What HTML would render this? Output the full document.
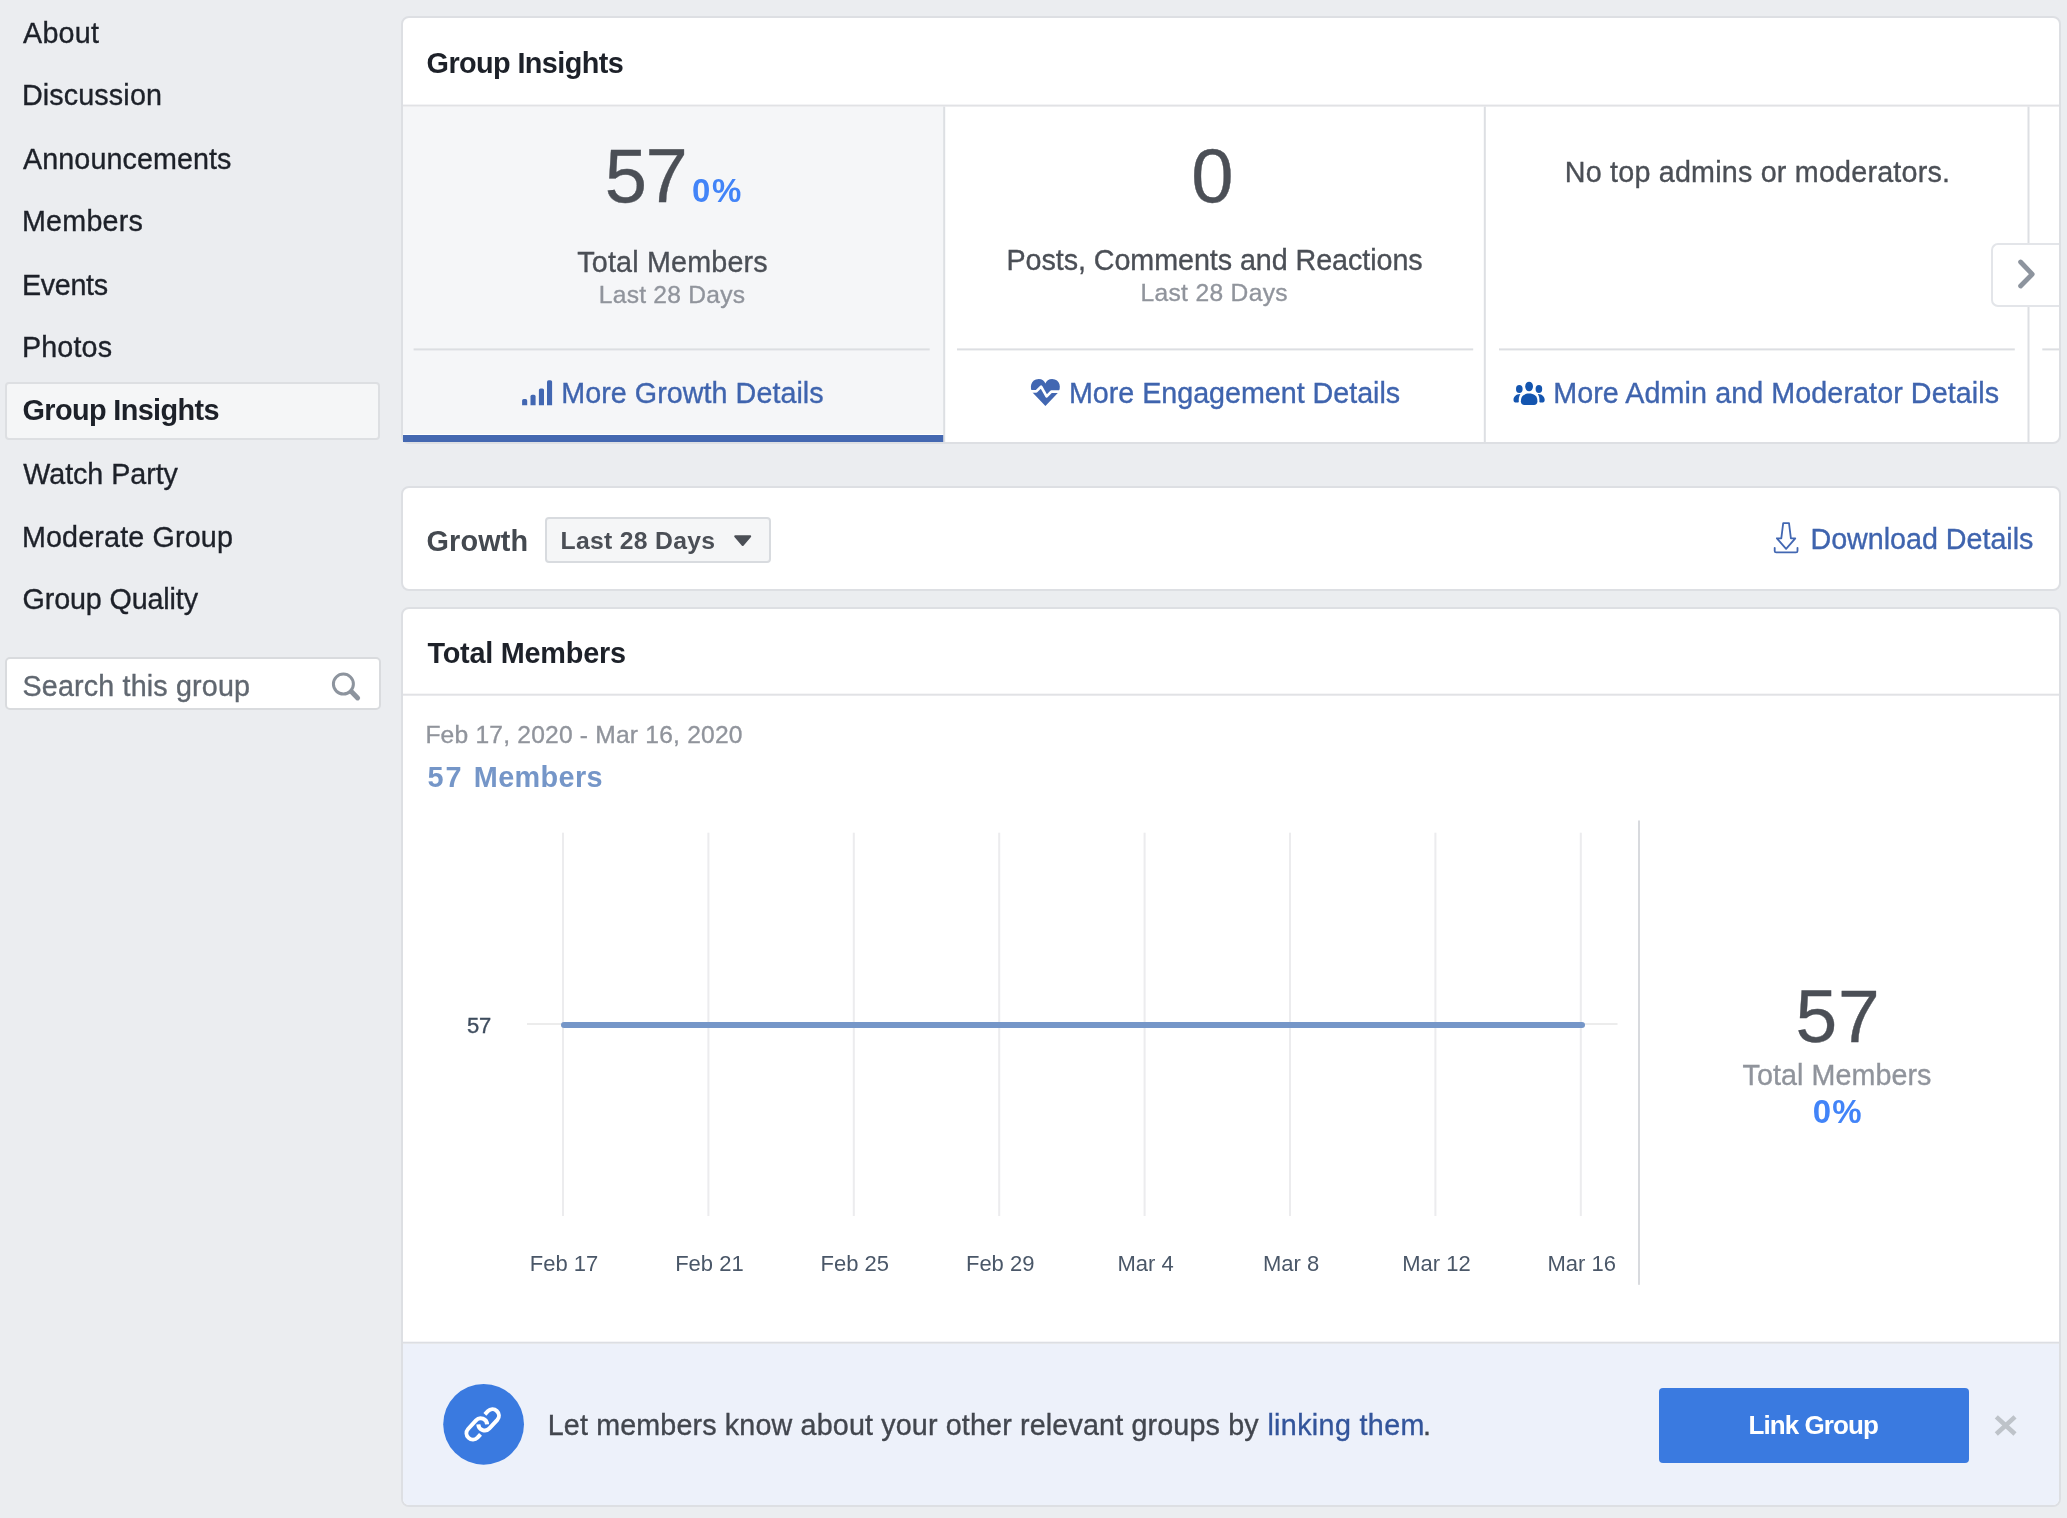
<!DOCTYPE html>
<html lang="en"><head><meta charset="utf-8"><title>Group Insights</title>
<style>
html,body{margin:0;padding:0}
body{width:2067px;height:1518px;overflow:hidden;position:relative;background:#ebedf0;font-family:"Liberation Sans",sans-serif;-webkit-font-smoothing:antialiased}
.t{position:absolute;white-space:pre;display:block;-webkit-text-stroke:0.35px currentColor}
#tx{position:absolute;left:0;top:0;width:2067px;height:1518px;will-change:transform}
.b{position:absolute;box-sizing:border-box}
.card{background:#fff;border:2px solid #dddfe3;border-radius:8px}
svg.ov{position:absolute;left:0;top:0;width:2067px;height:1518px;pointer-events:none}
.ax{font-family:"Liberation Sans",sans-serif;font-size:22px;fill:#4a5768}
</style></head><body>

<div class="b" style="left:5px;top:382px;width:375px;height:58px;background:#f5f6f7;border:2px solid #dddfe2;border-radius:4px"></div>
<div class="b" style="left:5px;top:657px;width:376px;height:53px;background:#fff;border:2px solid #d9dbde;border-radius:5px"></div>

<div class="b card" style="left:401px;top:16px;width:1660px;height:428px;overflow:hidden">
  <div class="b" style="left:0;top:89px;width:541px;height:327px;background:#f5f6f8"></div>
</div>
<div class="b" style="left:403px;top:435px;width:541px;height:7px;background:#4468b1"></div>
<div class="b" style="left:1991px;top:243px;width:70px;height:64px;background:#fff;border:2px solid #e3e5e9;border-right:0;border-radius:7px 0 0 7px"></div>
<div class="b" style="left:2059px;top:243px;width:2px;height:64px;background:#dddfe3"></div>

<div class="b card" style="left:401px;top:486px;width:1660px;height:105px"></div>
<div class="b" style="left:545px;top:517px;width:226px;height:46px;background:#f5f6f7;border:2px solid #d8dbdf;border-radius:4px"></div>

<div class="b card" style="left:401px;top:607px;width:1660px;height:900px;overflow:hidden">
  <div class="b" style="left:0;top:735px;width:1656px;height:170px;background:#edf1fa"></div>
</div>
<div class="b" style="left:1658.5px;top:1387.5px;width:310.5px;height:75.5px;background:#3a7ae0;border-radius:4px"></div>
<div id="tx">
<span class="t" style="left:23.10px;top:19.00px;font-size:28.7px;line-height:28.7px;color:#1d2129;letter-spacing:0.200px;">About</span>
<span class="t" style="left:21.90px;top:81.00px;font-size:28.7px;line-height:28.7px;color:#1d2129;letter-spacing:0.150px;">Discussion</span>
<span class="t" style="left:23.10px;top:145.00px;font-size:28.7px;line-height:28.7px;color:#1d2129;letter-spacing:0.076px;">Announcements</span>
<span class="t" style="left:21.90px;top:207.00px;font-size:28.7px;line-height:28.7px;color:#1d2129;letter-spacing:0.248px;">Members</span>
<span class="t" style="left:21.90px;top:271.00px;font-size:28.7px;line-height:28.7px;color:#1d2129;letter-spacing:-0.312px;">Events</span>
<span class="t" style="left:21.90px;top:333.00px;font-size:28.7px;line-height:28.7px;color:#1d2129;letter-spacing:0.166px;">Photos</span>
<span class="t" style="left:22.50px;top:395.88px;font-size:28.84px;line-height:28.84px;color:#1d2129;font-weight:700;-webkit-text-stroke:0;letter-spacing:-0.620px;">Group Insights</span>
<span class="t" style="left:23.30px;top:460.00px;font-size:28.7px;line-height:28.7px;color:#1d2129;letter-spacing:-0.052px;">Watch Party</span>
<span class="t" style="left:21.90px;top:523.00px;font-size:28.7px;line-height:28.7px;color:#1d2129;letter-spacing:0.166px;">Moderate Group</span>
<span class="t" style="left:22.50px;top:585.00px;font-size:28.7px;line-height:28.7px;color:#1d2129;letter-spacing:-0.120px;">Group Quality</span>
<span class="t" style="left:22.50px;top:672.00px;font-size:28.7px;line-height:28.7px;color:#606770;letter-spacing:0.163px;">Search this group</span>
<span class="t" style="left:426.60px;top:48.88px;font-size:28.84px;line-height:28.84px;color:#1d2129;font-weight:700;-webkit-text-stroke:0;letter-spacing:-0.605px;">Group Insights</span>
<span class="t" style="left:604.80px;top:137.95px;font-size:76.0px;line-height:76.0px;color:#4b4f56;letter-spacing:-1.668px;">57</span>
<span class="t" style="left:691.90px;top:175.39px;font-size:32.96px;line-height:32.96px;color:#4284f8;font-weight:700;-webkit-text-stroke:0;letter-spacing:1.673px;">0%</span>
<span class="t" style="left:577.30px;top:248.00px;font-size:28.7px;line-height:28.7px;color:#4b4f56;letter-spacing:0.185px;">Total Members</span>
<span class="t" style="left:598.80px;top:283.47px;font-size:24.6px;line-height:24.6px;color:#90949c;letter-spacing:0.251px;">Last 28 Days</span>
<span class="t" style="left:561.20px;top:379.00px;font-size:28.7px;line-height:28.7px;color:#3f64ae;letter-spacing:0.055px;">More Growth Details</span>
<span class="t" style="left:1191.20px;top:137.95px;font-size:76.0px;line-height:76.0px;color:#4b4f56;">0</span>
<span class="t" style="left:1006.50px;top:246.00px;font-size:28.7px;line-height:28.7px;color:#4b4f56;letter-spacing:-0.057px;">Posts, Comments and Reactions</span>
<span class="t" style="left:1140.50px;top:281.47px;font-size:24.6px;line-height:24.6px;color:#90949c;letter-spacing:0.323px;">Last 28 Days</span>
<span class="t" style="left:1069.00px;top:379.00px;font-size:28.7px;line-height:28.7px;color:#3f64ae;letter-spacing:-0.024px;">More Engagement Details</span>
<span class="t" style="left:1564.80px;top:158.00px;font-size:28.7px;line-height:28.7px;color:#4b4f56;letter-spacing:0.211px;">No top admins or moderators.</span>
<span class="t" style="left:1553.20px;top:379.00px;font-size:28.7px;line-height:28.7px;color:#3f64ae;letter-spacing:0.084px;">More Admin and Moderator Details</span>
<span class="t" style="left:426.60px;top:526.88px;font-size:28.84px;line-height:28.84px;color:#444950;font-weight:700;-webkit-text-stroke:0;letter-spacing:0.105px;">Growth</span>
<span class="t" style="left:560.60px;top:529.37px;font-size:24.72px;line-height:24.72px;color:#4b4f56;font-weight:700;-webkit-text-stroke:0;letter-spacing:0.300px;">Last 28 Days</span>
<span class="t" style="left:1810.50px;top:525.00px;font-size:28.7px;line-height:28.7px;color:#3f64ae;letter-spacing:-0.026px;">Download Details</span>
<span class="t" style="left:427.50px;top:638.88px;font-size:28.84px;line-height:28.84px;color:#1d2129;font-weight:700;-webkit-text-stroke:0;letter-spacing:-0.239px;">Total Members</span>
<span class="t" style="left:425.40px;top:723.47px;font-size:24.6px;line-height:24.6px;color:#90949c;letter-spacing:0.206px;">Feb 17, 2020 - Mar 16, 2020</span>
<span class="t" style="left:427.40px;top:762.88px;font-size:28.84px;line-height:28.84px;color:#7596c8;font-weight:700;-webkit-text-stroke:0;letter-spacing:2.067px;">57</span>
<span class="t" style="left:473.80px;top:762.88px;font-size:28.84px;line-height:28.84px;color:#7596c8;font-weight:700;-webkit-text-stroke:0;letter-spacing:0.377px;">Members</span>
<span class="t" style="left:1795.50px;top:978.80px;font-size:75.0px;line-height:75.0px;color:#4b4f56;letter-spacing:0.789px;">57</span>
<span class="t" style="left:1742.60px;top:1061.00px;font-size:28.7px;line-height:28.7px;color:#90949c;letter-spacing:0.052px;">Total Members</span>
<span class="t" style="left:1812.80px;top:1096.39px;font-size:32.96px;line-height:32.96px;color:#4284f8;font-weight:700;-webkit-text-stroke:0;letter-spacing:1.073px;">0%</span>
<span class="t" style="left:547.70px;top:1411.00px;font-size:28.7px;line-height:28.7px;color:#42464e;letter-spacing:0.151px;">Let members know about your other relevant groups by</span>
<span class="t" style="left:1267.40px;top:1411.00px;font-size:28.7px;line-height:28.7px;color:#33559b;letter-spacing:0.357px;">linking them</span>
<span class="t" style="left:1423.00px;top:1411.00px;font-size:28.7px;line-height:28.7px;color:#42464e;">.</span>
<span class="t" style="left:1748.50px;top:1412.29px;font-size:26.0px;line-height:26.0px;color:#ffffff;font-weight:700;-webkit-text-stroke:0;letter-spacing:-0.920px;">Link Group</span>
<span class="t" style="left:466.90px;top:1014.67px;font-size:22.0px;line-height:22.0px;color:#3e4c5e;letter-spacing:-0.035px;">57</span>
</div>
<svg class="ov" viewBox="0 0 2067 1518">
<rect x="403" y="104.60" width="1656.00" height="2" fill="#e1e2e5"/>
<rect x="943.20" y="106.6" width="2" height="335.40" fill="#dddfe3"/>
<rect x="1483.80" y="106.6" width="2" height="335.40" fill="#dddfe3"/>
<rect x="2027.50" y="106.6" width="2" height="136.40" fill="#dddfe3"/>
<rect x="2027.50" y="307" width="2" height="135.00" fill="#dddfe3"/>
<rect x="413.6" y="348.40" width="516.10" height="2" fill="#dcdee2"/>
<rect x="957" y="348.40" width="516.20" height="2" fill="#dcdee2"/>
<rect x="1499" y="348.40" width="515.80" height="2" fill="#dcdee2"/>
<rect x="2042.3" y="348.40" width="16.70" height="2" fill="#dcdee2"/>
<rect x="403" y="693.70" width="1656.00" height="2" fill="#e1e2e5"/>
<rect x="403" y="1341.70" width="1656.00" height="2" fill="#dcdee3"/>
<rect x="1638.00" y="820.5" width="2" height="464.30" fill="#d8dade"/>
<rect x="562.00" y="832.7" width="2" height="383.30" fill="#ececee"/>
<rect x="707.40" y="832.7" width="2" height="383.30" fill="#ececee"/>
<rect x="852.80" y="832.7" width="2" height="383.30" fill="#ececee"/>
<rect x="998.20" y="832.7" width="2" height="383.30" fill="#ececee"/>
<rect x="1143.60" y="832.7" width="2" height="383.30" fill="#ececee"/>
<rect x="1289.00" y="832.7" width="2" height="383.30" fill="#ececee"/>
<rect x="1434.40" y="832.7" width="2" height="383.30" fill="#ececee"/>
<rect x="1579.80" y="832.7" width="2" height="383.30" fill="#ececee"/>
<rect x="527" y="1023.00" width="1090.50" height="2" fill="#ececec"/>
<line x1="564" y1="1025" x2="1582" y2="1025" stroke="#7596c8" stroke-width="6" stroke-linecap="round"/>
<text class="ax" x="564.0" y="1271" text-anchor="middle">Feb 17</text>
<text class="ax" x="709.4" y="1271" text-anchor="middle">Feb 21</text>
<text class="ax" x="854.8" y="1271" text-anchor="middle">Feb 25</text>
<text class="ax" x="1000.2" y="1271" text-anchor="middle">Feb 29</text>
<text class="ax" x="1145.6" y="1271" text-anchor="middle">Mar 4</text>
<text class="ax" x="1291.0" y="1271" text-anchor="middle">Mar 8</text>
<text class="ax" x="1436.4" y="1271" text-anchor="middle">Mar 12</text>
<text class="ax" x="1581.8" y="1271" text-anchor="middle">Mar 16</text>
<path d="M522.1 405.2V400.70000000000005Q522.1 399.1 523.7 399.1H525.6Q527.2 399.1 527.2 400.70000000000005V405.2Z" fill="#4267b2"/><path d="M530.5 405.2V396.40000000000003Q530.5 394.8 532.1 394.8H534.0Q535.6 394.8 535.6 396.40000000000003V405.2Z" fill="#4267b2"/><path d="M538.9 405.2V390.1Q538.9 388.5 540.5 388.5H542.4Q544 388.5 544 390.1V405.2Z" fill="#4267b2"/><path d="M547 405.2V381.8Q547 380.2 548.6 380.2H550.5Q552.1 380.2 552.1 381.8V405.2Z" fill="#4267b2"/>
<g transform="translate(1030.7,379)"><path d="M14.7 27L2.3 13.9C-1.6 9.6-0.2 0 8 0C11.4 0 13.8 2 14.7 4.6C15.6 2 18 0 21.4 0C29.6 0 31 9.6 27.1 13.9Z" fill="#4267b2"/><path d="M-1 12.4H5.6L10.4 7.6L15.9 17.4L20.6 12.6H31" fill="none" stroke="#fff" stroke-width="2.7" stroke-linejoin="round"/></g>
<g transform="translate(1513.5,381.7)" fill="#1455af"><ellipse cx="15.6" cy="4.8" rx="3.9" ry="4.8"/><ellipse cx="5.8" cy="7.3" rx="3.3" ry="3.9"/><ellipse cx="25.4" cy="7.3" rx="3.3" ry="3.9"/><path d="M7.4 19.5C7.4 14 11 11.9 15.6 11.9C20.3 11.9 23.9 14 23.9 19.5C23.9 22 22.5 23.2 20.5 23.2H10.8C8.8 23.2 7.4 22 7.4 19.5Z"/><path d="M6.6 12.4C2.5 12.4 0 15.5 0 18.2C0 20 1.2 20.8 2.8 20.8H4.6C5.2 20.8 5.4 20.3 5.3 19.6C5.1 17 5.6 14.5 6.8 12.6Z"/><path d="M24.6 12.4C28.7 12.4 31.2 15.5 31.2 18.2C31.2 20 30 20.8 28.4 20.8H26.6C26 20.8 25.8 20.3 25.9 19.6C26.1 17 25.6 14.5 24.4 12.6Z"/></g>
<g transform="translate(1773.6,521.9)" fill="none" stroke="#4267b2" stroke-width="1.8" stroke-linejoin="round" stroke-linecap="round"><path d="M9.6 1.2H15.4L17.3 16.4H21.7L12.5 26.9L3.3 16.4H7.7Z"/><path d="M1.1 25.9V29Q1.1 30.5 2.6 30.5H22.4Q23.9 30.5 23.9 29V25.9"/></g>
<path d="M2020.6 262L2032.2 274.2L2020.6 286" fill="none" stroke="#8d949e" stroke-width="4.8" stroke-linecap="round" stroke-linejoin="round"/>
<path d="M735.2 536.3H750.2L742.7 545Z" fill="#4b4f56" stroke="#4b4f56" stroke-width="2" stroke-linejoin="round"/>
<circle cx="343.4" cy="684.1" r="10" fill="none" stroke="#8d949e" stroke-width="3"/><path d="M351.3 691.6L357.6 697.9" stroke="#8d949e" stroke-width="5" stroke-linecap="round"/>
<circle cx="483.6" cy="1424.3" r="40.4" fill="#3a7ae0"/>
<path d="M484.88 1414.44L487.89 1411.17A6.4 6.4 0 0 1 497.31 1419.83L489.41 1428.43A6.4 6.4 0 0 1 478.31 1424.37" fill="none" stroke="#fff" stroke-width="4"/><path d="M480.52 1434.36L477.51 1437.63A6.4 6.4 0 0 1 468.09 1428.97L475.99 1420.37A6.4 6.4 0 0 1 487.09 1424.43" fill="none" stroke="#fff" stroke-width="4"/>
<path d="M1996.3 1416.9L2015 1434M2015 1416.9L1996.3 1434" stroke="#bec3c9" stroke-width="4.6" fill="none"/>
</svg>
</body></html>
